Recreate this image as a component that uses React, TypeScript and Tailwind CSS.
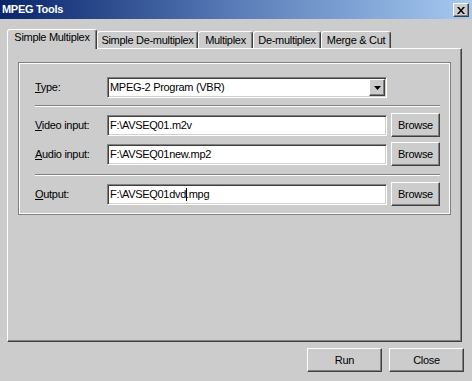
/* MPEG Tools — classic Win32 dialog */

const raised =
  "border border-t-white border-l-white border-r-[#404040] border-b-[#404040] shadow-[inset_-1px_-1px_0_#808080]";
const sunken =
  "border border-t-[#808080] border-l-[#808080] border-r-white border-b-white shadow-[inset_1px_1px_0_#404040,inset_-1px_-1px_0_#d4d0c8]";

const tabs = [
  { label: "Simple Multiplex", w: "w-[90px]", active: true },
  { label: "Simple De-multiplex", w: "w-[101px]", active: false },
  { label: "Multiplex", w: "w-[55px]", active: false },
  { label: "De-multiplex", w: "w-[68px]", active: false },
  { label: "Merge & Cut", w: "w-[70px]", active: false },
];

function Mnemonic({ first, rest }: { first: string; rest: string }) {
  return (
    <span>
      <span className="underline underline-offset-[1px]">{first}</span>
      {rest}
    </span>
  );
}

function Button({ children, className = "" }: { children: React.ReactNode; className?: string }) {
  return (
    <div className={`${raised} flex items-center justify-center bg-[#cccccc] text-black ${className}`}>
      {children}
    </div>
  );
}

function Separator() {
  return <div className="h-0 w-[405px] border-t border-b border-t-[#808080] border-b-white" />;
}

function FileRow({ first, rest, value }: { first: string; rest: string; value: React.ReactNode }) {
  return (
    <div className="flex items-start h-[24px]">
      <div className="w-[72px] h-[24px] flex items-center">
        <Mnemonic first={first} rest={rest} />
      </div>
      <div className={`${sunken} mt-[2px] w-[280px] h-[21px] bg-white flex items-center pl-[2px] whitespace-nowrap`}>
        {value}
      </div>
      <Button className="ml-[4px] w-[49px] h-[24px]">Browse</Button>
    </div>
  );
}

export default function App() {
  return (
    <div className="w-[472px] h-[381px] bg-[#cccccc] flex flex-col overflow-hidden font-['Liberation_Sans',Arial,sans-serif] text-[11px] leading-[13px] tracking-[-0.3px] text-black select-none">
      {/* Title bar */}
      <div className="h-[19px] flex items-start bg-gradient-to-r from-[#0a246a] via-[#5a7cb8] to-[#a6caf0]">
        <span className="pl-[2px] h-[19px] flex items-center font-bold text-white">MPEG Tools</span>
        <div className={`${raised} ml-auto mr-[3px] mt-[3px] w-[16px] h-[14px] bg-[#cccccc] flex items-center justify-center`}>
          <svg width="8" height="7" viewBox="0 0 8 7">
            <path d="M0 0h2l2 2.5L6 0h2L5 3.5 8 7H6L4 4.5 2 7H0l3-3.5z" fill="#000" />
          </svg>
        </div>
      </div>

      <div className="pl-[7px] pt-[10px]">
        {/* Tabs */}
        <div className="flex items-end h-[19px]">
          {tabs.map((t) =>
            t.active ? (
              <div
                key={t.label}
                className={`${t.w} h-[20px] -mb-px relative z-10 bg-[#cccccc] border-t border-l border-r border-t-white border-l-white border-r-[#404040] rounded-t-[3px] shadow-[inset_-1px_0_0_#808080] flex justify-center pt-px whitespace-nowrap`}
              >
                {t.label}
              </div>
            ) : (
              <div
                key={t.label}
                className={`${t.w} h-[17px] bg-[#cccccc] border-t border-l border-r border-t-white border-l-white border-r-[#404040] rounded-t-[3px] shadow-[inset_-1px_0_0_#808080] flex justify-center pt-[2px] whitespace-nowrap`}
              >
                {t.label}
              </div>
            )
          )}
        </div>

        {/* Tab panel */}
        <div className={`${raised} w-[455px] h-[294px] pl-[10px] pt-[13px]`}>
          <div className="w-[433px] h-[153px] border border-[#808080] shadow-[inset_1px_1px_0_white,inset_-1px_-1px_0_white] pl-[16px] pt-[14px] flex flex-col">
            {/* Type */}
            <div className="flex items-center h-[21px]">
              <div className="w-[72px]">
                <Mnemonic first="T" rest="ype:" />
              </div>
              <div className={`${sunken} w-[280px] h-[21px] bg-white flex items-center pl-[2px] pr-px`}>
                <span className="whitespace-nowrap">MPEG-2 Program (VBR)</span>
                <div className={`${raised} ml-auto w-[16px] h-[17px] bg-[#cccccc] flex items-center justify-center`}>
                  <svg width="7" height="4" viewBox="0 0 7 4">
                    <polygon points="0,0 7,0 3.5,4" fill="#000" />
                  </svg>
                </div>
              </div>
            </div>

            <div className="mt-[7px]">
              <Separator />
            </div>

            <div className="mt-[6px] flex flex-col gap-[5px]">
              <FileRow first="V" rest="ideo input:" value="F:\AVSEQ01.m2v" />
              <FileRow first="A" rest="udio input:" value="F:\AVSEQ01new.mp2" />
            </div>

            <div className="mt-[8px]">
              <Separator />
            </div>

            <div className="mt-[6px]">
              <FileRow
                first="O"
                rest="utput:"
                value={
                  <>
                    F:\AVSEQ01dvd
                    <span className="inline-block w-px h-[13px] bg-black -mr-px" />
                    .mpg
                  </>
                }
              />
            </div>
          </div>
        </div>
      </div>

      {/* Dialog buttons */}
      <div className="mt-[6px] flex justify-end gap-[7px] pr-[8px]">
        <Button className="w-[75px] h-[24px]">Run</Button>
        <Button className="w-[75px] h-[24px]">Close</Button>
      </div>
    </div>
  );
}
